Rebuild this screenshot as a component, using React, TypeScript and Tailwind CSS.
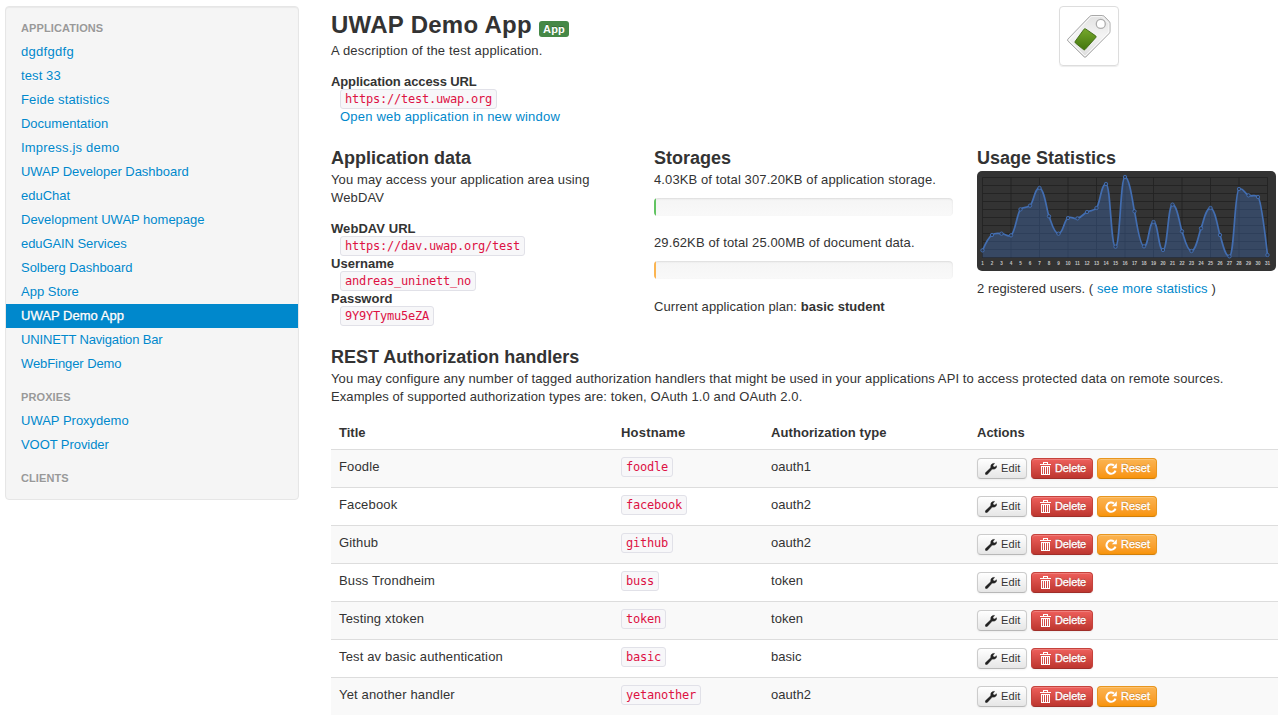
import type { ReactNode } from "react";
import clsx from "clsx";

type NavItem = { name: string; spacing: string; active?: boolean };

const applications: NavItem[] = [
  { name: "dgdfgdfg", spacing: "tracking-[0.3px]" },
  { name: "test 33", spacing: "tracking-[0.1px]" },
  { name: "Feide statistics", spacing: "tracking-[0.15px]" },
  { name: "Documentation", spacing: "tracking-[-0.02px]" },
  { name: "Impress.js demo", spacing: "tracking-[0.2px]" },
  { name: "UWAP Developer Dashboard", spacing: "tracking-[-0.03px]" },
  { name: "eduChat", spacing: "tracking-[0px]" },
  { name: "Development UWAP homepage", spacing: "tracking-[0px]" },
  { name: "eduGAIN Services", spacing: "tracking-[-0.08px]" },
  { name: "Solberg Dashboard", spacing: "tracking-[-0.03px]" },
  { name: "App Store", spacing: "tracking-[0px]" },
  { name: "UWAP Demo App", spacing: "tracking-[0.03px]", active: true },
  { name: "UNINETT Navigation Bar", spacing: "tracking-[-0.16px]" },
  { name: "WebFinger Demo", spacing: "tracking-[-0.08px]" },
];

const proxies: NavItem[] = [
  { name: "UWAP Proxydemo", spacing: "tracking-[0px]" },
  { name: "VOOT Provider", spacing: "tracking-[-0.07px]" },
];

const handlers = [
  { title: "Foodle", host: "foodle", type: "oauth1", reset: true },
  { title: "Facebook", host: "facebook", type: "oauth2", reset: true },
  { title: "Github", host: "github", type: "oauth2", reset: true },
  { title: "Buss Trondheim", host: "buss", type: "token", reset: false },
  { title: "Testing xtoken", host: "token", type: "token", reset: false },
  { title: "Test av basic authentication", host: "basic", type: "basic", reset: false },
  { title: "Yet another handler", host: "yetanother", type: "oauth2", reset: true },
];

function NavHeader({ children }: { children: ReactNode }) {
  return (
    <h6 className="px-[15px] py-[3px] text-[11px] leading-[18px] font-bold tracking-[0.1px] text-[#999999] uppercase [text-shadow:0_1px_0_rgba(255,255,255,0.5)]">
      {children}
    </h6>
  );
}

function NavList({ items }: { items: NavItem[] }) {
  return (
    <ul>
      {items.map((item) => (
        <li key={item.name}>
          <a
            href="#"
            className={clsx(
              "block px-[15px] py-[3px]",
              item.spacing,
              item.active
                ? "bg-[#0088cc] text-white [-webkit-text-stroke:0.3px_#ffffff] [text-shadow:0_-1px_0_rgba(0,0,0,0.2)]"
                : "text-[#0088cc] [text-shadow:0_1px_0_rgba(255,255,255,0.5)]",
            )}
          >
            {item.name}
          </a>
        </li>
      ))}
    </ul>
  );
}

function Sidebar() {
  return (
    <nav className="h-[494px] w-[294px] shrink-0 rounded-[4px] border border-[#e6e6e6] bg-[#f5f5f5] py-[9px] shadow-[inset_0_1px_1px_rgba(0,0,0,0.05)]">
      <NavHeader>Applications</NavHeader>
      <NavList items={applications} />
      <div className="mt-[9px]">
        <NavHeader>Proxies</NavHeader>
      </div>
      <NavList items={proxies} />
      <div className="mt-[9px]">
        <NavHeader>Clients</NavHeader>
      </div>
    </nav>
  );
}

function Code({ children }: { children: ReactNode }) {
  return (
    <code className="inline-block h-5 rounded-[3px] border border-[#e1e1e8] bg-[#f7f7f9] px-1 font-['DejaVu_Sans_Mono',monospace] text-[12px] leading-[18px] tracking-[-0.224px] whitespace-nowrap text-[#dd1144]">
      {children}
    </code>
  );
}

function Field({ label, spacing, value }: { label: string; spacing: string; value: string }) {
  return (
    <>
      <dt className={clsx("h-[18px] pt-px font-bold", spacing)}>{label}</dt>
      <dd className="ml-[9px] flex h-[17px] items-center">
        <Code>{value}</Code>
      </dd>
    </>
  );
}

function Heading({ children }: { children: ReactNode }) {
  return <h3 className="h-[27px] pt-px text-[18px] leading-[27px] font-bold">{children}</h3>;
}

function TagIcon() {
  return (
    <svg width="58" height="58" viewBox="1 1 58 58">
      <defs>
        <linearGradient id="tag-body" x1="0" y1="0" x2="0" y2="1">
          <stop offset="0" stopColor="#e2e2e2" />
          <stop offset="0.5" stopColor="#f4f4f4" />
          <stop offset="1" stopColor="#dcdcdc" />
        </linearGradient>
        <linearGradient id="tag-green" x1="0" y1="0" x2="0" y2="1">
          <stop offset="0" stopColor="#76a82c" />
          <stop offset="1" stopColor="#42750c" />
        </linearGradient>
      </defs>
      <path
        d="M8.8 33.2 30.8 10.3Q31.6 9.5 32.8 9.5H43.4Q44.6 9.5 45.4 10.4L50.1 15.3Q51 16.2 51 17.4V25.4Q51 26.6 50.1 27.5L26.8 51Q26 51.7 25.2 50.9L8.9 35Q8.1 34.1 8.8 33.2Z"
        fill="url(#tag-body)"
        stroke="#a8a8a8"
      />
      <path
        d="M10 34 31.5 11.3Q32.2 10.6 33.2 10.6H43.1L49.9 17.6V25.2Q49.9 26.2 49.2 26.9L26 50Z"
        fill="none"
        stroke="#ffffff"
        strokeWidth="1"
        opacity="0.75"
      />
      <circle cx="41.8" cy="17.9" r="4.5" fill="#ffffff" stroke="#adadad" strokeWidth="1.3" />
      <path
        d="M26.6 22.9 36.6 29.8Q37.5 30.6 36.8 31.5L26 43.6Q25.3 44.2 24.5 43.6L16.4 37Q15.6 36.2 16.3 35.2L25 23.2Q25.7 22.4 26.6 22.9Z"
        fill="url(#tag-green)"
        stroke="#3b660f"
        strokeWidth="0.9"
      />
    </svg>
  );
}

const usage: [number, number][] = [
  331, 285, 281, 286, 208, 197, 144, 229, 281, 234, 235, 216, 204, 132, 320, 111, 214, 319, 246,
  330, 194, 274, 333, 265, 204, 285, 349, 147, 166, 171, 345,
].map((v, i) => [5.5 + i * 9.5, v / 3 - 31]);

/* Smooth curve: each node's two control points lie on the bisector of its neighbours. */
function anchors(p: [number, number], q: [number, number], r: [number, number]) {
  const l1 = (q[0] - p[0]) / 2;
  const l2 = (r[0] - q[0]) / 2;
  let a = Math.atan((q[0] - p[0]) / Math.abs(q[1] - p[1]));
  let b = Math.atan((r[0] - q[0]) / Math.abs(q[1] - r[1]));
  if (p[1] < q[1]) a = Math.PI - a;
  if (r[1] < q[1]) b = Math.PI - b;
  const alpha = Math.PI / 2 - ((a + b) % (Math.PI * 2)) / 2;
  return [
    q[0] - l1 * Math.sin(alpha + a),
    q[1] + l1 * Math.cos(alpha + a),
    q[0] + l2 * Math.sin(alpha + b),
    q[1] + l2 * Math.cos(alpha + b),
  ];
}

function curve(points: [number, number][]) {
  let d = `M${points[0][0]} ${points[0][1]}C${points[0][0]} ${points[0][1]}`;
  for (let i = 1; i < points.length - 1; i++) {
    const [x1, y1, x2, y2] = anchors(points[i - 1], points[i], points[i + 1]);
    d += ` ${x1} ${y1} ${points[i][0]} ${points[i][1]} ${x2} ${y2}`;
  }
  const last = points[points.length - 1];
  return `${d} ${last[0]} ${last[1]} ${last[0]} ${last[1]}`;
}

function UsageChart() {
  const line = curve(usage);
  return (
    <svg width="299" height="100" viewBox="0 0 299 100" className="block">
      <rect width="299" height="100" rx="5" fill="#333333" />
      {Array.from({ length: 11 }, (_, i) => (
        <path key={i} d={`M5.5 ${6.5 + i * 8}H290.5`} stroke="#222222" strokeWidth="0.9" />
      ))}
      {Array.from({ length: 11 }, (_, i) => (
        <path key={i} d={`M${5.5 + i * 28.5} 6.5V86.5`} stroke="#222222" strokeWidth="0.9" />
      ))}
      <path d={`${line}V86.5H5.5Z`} fill="#3f66a8" fillOpacity="0.42" />
      <path d={line} fill="none" stroke="#426db0" strokeWidth="1.7" strokeLinejoin="round" />
      {usage.map(([x, y]) => (
        <circle key={x} cx={x} cy={y} r="1.7" fill="#2c3a52" stroke="#4470b4" strokeWidth="0.9" />
      ))}
      {usage.map(([x], i) => (
        <text
          key={x}
          x={x}
          y="94"
          textAnchor="middle"
          fontSize="4.6"
          fontWeight="700"
          fontFamily="Liberation Sans, sans-serif"
          fill="#c4c4c4"
        >
          {i + 1}
        </text>
      ))}
    </svg>
  );
}

function Progress({ color }: { color: string }) {
  return (
    <div className="h-[18px] overflow-hidden rounded-[4px] bg-linear-to-b from-[#f5f5f5] to-[#f9f9f9]">
      <div className="flex h-full rounded-[4px] shadow-[inset_0_1px_2px_rgba(0,0,0,0.1)]">
        <div className={clsx("h-full w-[2px] shadow-[inset_0_-1px_0_rgba(0,0,0,0.15)]", color)} />
      </div>
    </div>
  );
}

function WrenchIcon() {
  return (
    <svg
      width="12"
      height="13"
      viewBox="0 -1 12 13"
      fill="#222222"
      stroke="#222222"
      strokeWidth="0.35"
      strokeLinejoin="round"
    >
      <path d="M9.2.2 7.2.8Q5.3 2 5.8 4.2L5.2 5.2.6 9.6Q-.2 10.6.6 11.4T2.5 11.3L6.8 6.6 7.8 6.1Q9.8 6.7 11.2 5.1L11.8 3.1 11.5 2.7 9.7 3.9 8.3 3.5 8 2.2 9.6.7Z" />
    </svg>
  );
}

function TrashIcon() {
  return (
    <svg width="11" height="13" viewBox="0 0 11 13" fill="#ffffff">
      <path d="M3 0H8V2H11V3H0V2H3ZM4 1V2H7V1Z" fillRule="evenodd" />
      <path d="M1 4H10V13H1ZM2.1 5V12H3V5ZM4 5V12H5V5ZM6 5V12H7V5ZM8 5V12H8.9V5Z" fillRule="evenodd" />
    </svg>
  );
}

function ResetIcon() {
  return (
    <svg width="12" height="13" viewBox="0 -1 12 13">
      <path d="M9 2.5A4.6 4.6 0 1 0 10.5 7.6" fill="none" stroke="#ffffff" strokeWidth="2.1" />
      <path d="M11.8.3V5.2H6.9Z" fill="#ffffff" />
    </svg>
  );
}

const buttonBase =
  "flex h-[21px] items-center rounded-[4px] border text-[11px] leading-[18px] shadow-[inset_0_1px_0_rgba(255,255,255,0.2),0_1px_2px_rgba(0,0,0,0.05)]";

function Actions({ reset }: { reset: boolean }) {
  return (
    <div className="flex gap-1">
      <button
        className={clsx(
          buttonBase,
          "w-[50px] gap-1 border-[#cccccc] border-b-[#b8b8b8] bg-linear-to-b from-white to-[#e6e6e6] pl-[7px] tracking-[0.1px] text-[#333333] [text-shadow:0_1px_1px_rgba(255,255,255,0.75)]",
        )}
      >
        <WrenchIcon />
        Edit
      </button>
      <button
        className={clsx(
          buttonBase,
          "w-[62px] gap-1 border-[#c5423c] border-b-[#9f2e29] bg-linear-to-b from-[#ee5f5b] to-[#bd362f] pl-[8px] tracking-[-0.12px] text-white [-webkit-text-stroke:0.3px_#ffffff] [text-shadow:0_-1px_0_rgba(0,0,0,0.25)]",
        )}
      >
        <TrashIcon />
        Delete
      </button>
      {reset && (
        <button
          className={clsx(
            buttonBase,
            "w-[60px] gap-1 border-[#e8961f] border-b-[#d07f0c] bg-linear-to-b from-[#fbb450] to-[#f89406] pl-[7px] tracking-[0.1px] text-white [-webkit-text-stroke:0.3px_#ffffff] [text-shadow:0_-1px_0_rgba(0,0,0,0.25)]",
          )}
        >
          <ResetIcon />
          Reset
        </button>
      )}
    </div>
  );
}

function HandlerTable() {
  return (
    <table className="mt-[9px] w-[947px] table-fixed border-collapse text-left">
      <colgroup>
        <col className="w-[282px]" />
        <col className="w-[150px]" />
        <col className="w-[206px]" />
        <col />
      </colgroup>
      <thead>
        <tr className="h-[34px]">
          <th className="px-2 pt-[2px] tracking-[0px]">Title</th>
          <th className="px-2 pt-[2px] tracking-[0.2px]">Hostname</th>
          <th className="px-2 pt-[2px] tracking-[0.08px]">Authorization type</th>
          <th className="px-2 pt-[2px] tracking-[0px]">Actions</th>
        </tr>
      </thead>
      <tbody>
        {handlers.map((h) => (
          <tr key={h.title} className="h-[38px] border-t border-[#dddddd] align-top odd:bg-[#f9f9f9]">
            <td className="px-2 pt-2 tracking-[0.15px]">{h.title}</td>
            <td className="px-2 pt-[7px]">
              <div className="flex">
                <Code>{h.host}</Code>
              </div>
            </td>
            <td className="px-2 pt-2 tracking-[0.05px]">{h.type}</td>
            <td className="px-2 pt-2">
              <Actions reset={h.reset} />
            </td>
          </tr>
        ))}
      </tbody>
    </table>
  );
}

export default function App() {
  return (
    <div className="flex h-[727px] w-[1286px] gap-8 overflow-hidden bg-white pt-[6px] pl-[5px] font-['Liberation_Sans',Arial,sans-serif] text-[13px] leading-[18px] text-[#333333]">
      <Sidebar />
      <main className="w-[947px] shrink-0">
        <header className="flex h-[138px] items-start">
          <div className="w-[728px]">
            <div className="flex h-9 items-center">
              <h2 className="pt-[2px] text-[24px] leading-9 font-bold tracking-[0.28px] whitespace-nowrap">
                UWAP Demo App
              </h2>
              <span className="mt-[10px] ml-[7px] flex h-4 w-[30px] items-center justify-center rounded-[3px] bg-[#468847] text-[11px] leading-[14px] font-bold tracking-[0.2px] text-white [text-shadow:0_-1px_0_rgba(0,0,0,0.25)]">
                App
              </span>
            </div>
            <p className="tracking-[0.185px]">A description of the test application.</p>
            <dl className="mt-[12px]">
              <Field
                label="Application access URL"
                spacing="tracking-[-0.11px]"
                value="https://test.uwap.org"
              />
              <dd className="ml-[9px] pt-px">
                <a href="#" className="tracking-[0.2px] text-[#0088cc]">
                  Open web application in new window
                </a>
              </dd>
            </dl>
          </div>
          <div className="h-[60px] w-[60px] rounded-[4px] border border-[#dddddd] shadow-[0_1px_1px_rgba(0,0,0,0.075)]">
            <TagIcon />
          </div>
        </header>

        <div className="flex h-[199px] gap-6">
          <section className="w-[299px]">
            <Heading>Application data</Heading>
            <p className="w-[280px] tracking-[0.127px]">
              You may access your application area using WebDAV
            </p>
            <dl className="mt-[12px]">
              <Field
                label="WebDAV URL"
                spacing="tracking-[0.06px]"
                value="https://dav.uwap.org/test"
              />
              <Field label="Username" spacing="tracking-[0.03px]" value="andreas_uninett_no" />
              <Field label="Password" spacing="tracking-[0px]" value="9Y9YTymu5eZA" />
            </dl>
          </section>

          <section className="w-[299px]">
            <Heading>Storages</Heading>
            <p className="mb-[9px] tracking-[0.108px]">
              4.03KB of total 307.20KB of application storage.
            </p>
            <Progress color="bg-[#62c462]" />
            <p className="mt-[18px] mb-[9px] tracking-[0.115px]">
              29.62KB of total 25.00MB of document data.
            </p>
            <Progress color="bg-[#fbb450]" />
            <p className="mt-[19px] tracking-[0.083px]">
              Current application plan: <b className="tracking-[0.016px]">basic student</b>
            </p>
          </section>

          <section className="w-[299px]">
            <Heading>Usage Statistics</Heading>
            <UsageChart />
            <p className="mt-[9px] tracking-[0.03px]">
              2 registered users. ({" "}
              <a href="#" className="tracking-[0.17px] text-[#0088cc]">
                see more statistics
              </a>{" "}
              )
            </p>
          </section>
        </div>

        <section>
          <Heading>REST Authorization handlers</Heading>
          <p className="tracking-[0.095px]">
            You may configure any number of tagged authorization handlers that might be used in your
            applications API to access protected data on remote sources.
            <br />
            Examples of supported authorization types are: token, OAuth 1.0 and OAuth 2.0.
          </p>
          <HandlerTable />
        </section>
      </main>
    </div>
  );
}
